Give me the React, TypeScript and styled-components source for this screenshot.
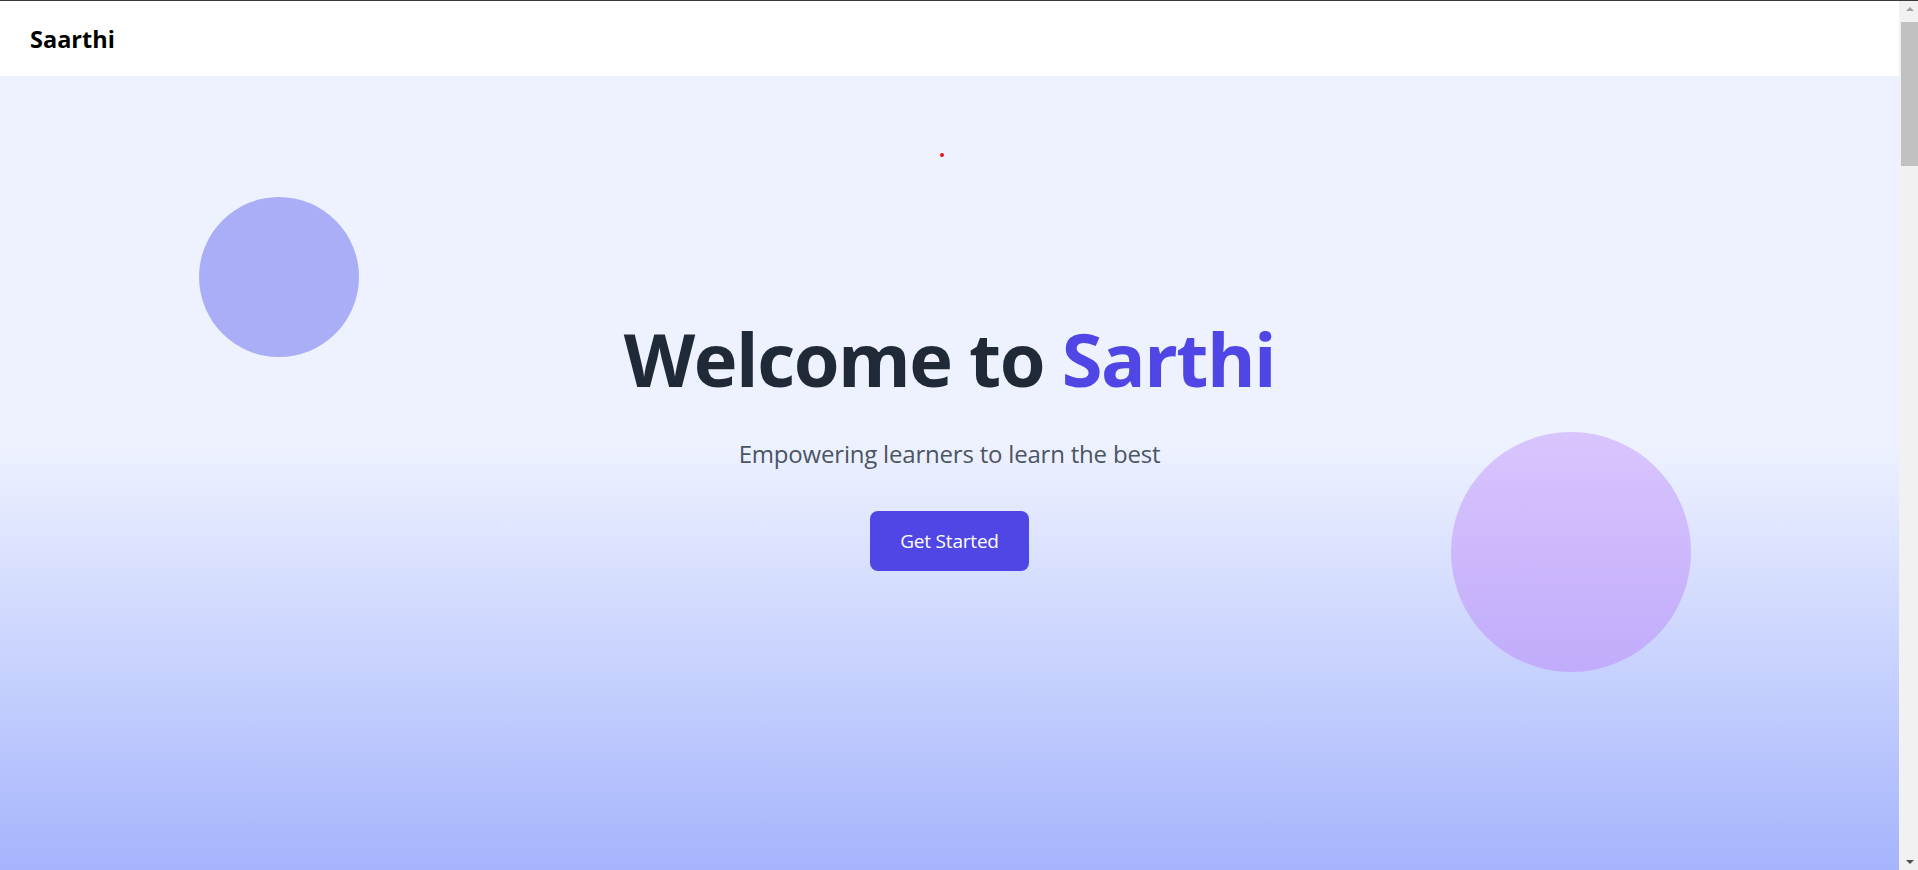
import React from "react";
import styled, { createGlobalStyle } from "styled-components";

const GlobalStyle = createGlobalStyle`
  html, body {
    margin: 0;
    padding: 0;
  }
  body {
    border-top: 1px solid #3a3a3a;
    font-family: "Open Sans", "Noto Sans", Arial, sans-serif;
    background: #ffffff;
  }
  * { box-sizing: border-box; }
`;

const Shell = styled.div`
  display: flex;
  align-items: flex-start;
`;

const Page = styled.div`
  flex: 1;
  min-width: 0;
  display: flex;
  flex-direction: column;
  min-height: 5100px;
  background: #a5b4fc;
`;

const Rail = styled.aside`
  position: sticky;
  top: 0;
  width: 19px;
  height: 869px;
  flex-shrink: 0;
  display: flex;
  flex-direction: column;
  background: #f1f1f1;
  padding-left: 2px;
`;

const RailButton = styled.div<{ $down?: boolean }>`
  height: 17px;
  display: flex;
  align-items: center;
  justify-content: center;
  &::before {
    content: "";
    width: 0;
    height: 0;
    border-left: 4px solid transparent;
    border-right: 4px solid transparent;
    ${(p) =>
      p.$down
        ? "border-top: 4px solid #505050; margin-top: 1px;"
        : "border-bottom: 4px solid #a3a3a3; margin-bottom: 1px;"}
  }
`;

const RailTrack = styled.div`
  flex: 1;
  padding-top: 4px;
`;

const Thumb = styled.div`
  height: 144px;
  background: #c1c1c1;
`;

const Header = styled.header`
  height: 75px;
  flex-shrink: 0;
  display: flex;
  align-items: center;
  padding: 0 30px;
  background: #ffffff;
`;

const Brand = styled.div`
  font-family: "Open Sans", sans-serif;
  font-weight: 700;
  font-size: 23.5px;
  color: #000000;
`;

const Hero = styled.section`
  position: relative;
  height: 794px;
  flex-shrink: 0;
  overflow: hidden;
  display: flex;
  flex-direction: column;
  align-items: center;
  padding-top: 246px;
  background: linear-gradient(
    to bottom,
    #eef2ff 0%,
    #eef2ff 46%,
    #a5b4fc 100%
  );
`;

const Blob = styled.div<{ $size: number; $bg: string }>`
  position: absolute;
  width: ${(p) => p.$size}px;
  height: ${(p) => p.$size}px;
  border-radius: 50%;
  background: ${(p) => p.$bg};
`;

const LeftBlob = styled(Blob)`
  left: 199px;
  top: 121px;
`;

const RightBlob = styled(Blob)`
  left: 1451px;
  top: 356px;
`;

const Dot = styled.span`
  position: absolute;
  left: 940px;
  top: 77px;
  width: 4px;
  height: 4px;
  border-radius: 50%;
  background: #e5161b;
`;

const Title = styled.h1`
  position: relative;
  margin: 0;
  font-family: "Open Sans", sans-serif;
  font-weight: 700;
  font-size: 74px;
  line-height: 1;
  color: #1f2937;
  letter-spacing: -1.5px;
`;

const Accent = styled.span`
  color: #4f46e5;
`;

const Subtitle = styled.p`
  position: relative;
  margin: 42px 0 0;
  font-family: "Open Sans", sans-serif;
  font-weight: 400;
  font-size: 24px;
  line-height: 32px;
  color: #4b5563;
  letter-spacing: -0.2px;
`;

const CTA = styled.button`
  position: relative;
  margin-top: 41px;
  width: 159px;
  height: 60px;
  border: none;
  border-radius: 8px;
  background: #4f46e5;
  color: #ffffff;
  font-family: "Open Sans", sans-serif;
  font-size: 19px;
  font-weight: 400;
  cursor: pointer;
  letter-spacing: -0.2px;
`;

export default function App() {
  return (
    <>
      <GlobalStyle />
      <Shell>
        <Page>
          <Header>
            <Brand>Saarthi</Brand>
          </Header>
          <Hero>
            <Dot />
            <LeftBlob $size={160} $bg="#a9aef7" />
            <RightBlob
              $size={240}
              $bg="linear-gradient(to bottom, #d9c5fd 0%, #cdb8fc 50%, #c0acfb 100%)"
            />
            <Title>
              Welcome to <Accent>Sarthi</Accent>
            </Title>
            <Subtitle>Empowering learners to learn the best</Subtitle>
            <CTA>Get Started</CTA>
          </Hero>
        </Page>
        <Rail aria-hidden="true">
          <RailButton />
          <RailTrack>
            <Thumb />
          </RailTrack>
          <RailButton $down />
        </Rail>
      </Shell>
    </>
  );
}
